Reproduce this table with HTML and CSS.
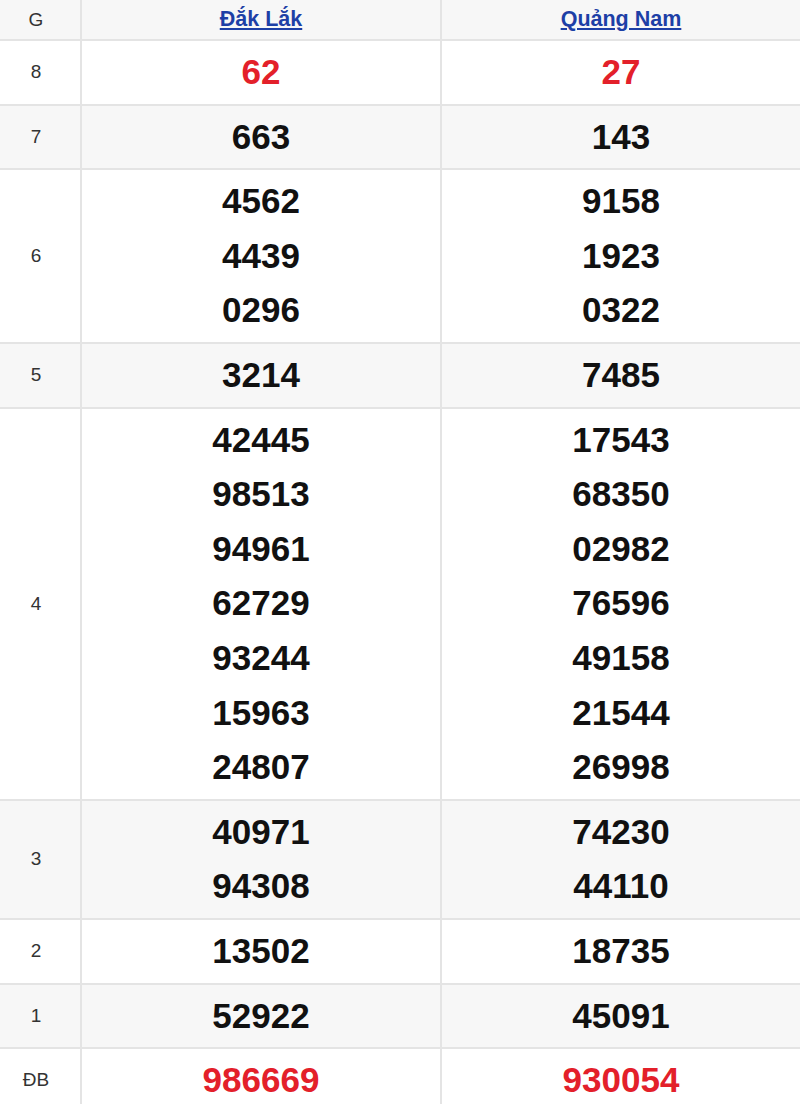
FILE: index.html
```html
<!DOCTYPE html>
<html lang="vi">
<head>
<meta charset="utf-8">
<title>Kết quả xổ số</title>
<link rel="stylesheet" href="styles.css">
</head>
<body>
<table class="kq">
  <colgroup>
    <col class="c-g">
    <col class="c-p">
    <col class="c-p">
  </colgroup>
  <thead>
    <tr class="alt head">
      <th class="g">G</th>
      <th><a href="#">Đắk Lắk</a></th>
      <th><a href="#">Quảng Nam</a></th>
    </tr>
  </thead>
  <tbody>
    <tr>
      <td class="g">8</td>
      <td class="red"><div>62</div></td>
      <td class="red"><div>27</div></td>
    </tr>
    <tr class="alt">
      <td class="g">7</td>
      <td><div>663</div></td>
      <td><div>143</div></td>
    </tr>
    <tr>
      <td class="g">6</td>
      <td><div>4562</div><div>4439</div><div>0296</div></td>
      <td><div>9158</div><div>1923</div><div>0322</div></td>
    </tr>
    <tr class="alt">
      <td class="g">5</td>
      <td><div>3214</div></td>
      <td><div>7485</div></td>
    </tr>
    <tr>
      <td class="g">4</td>
      <td><div>42445</div><div>98513</div><div>94961</div><div>62729</div><div>93244</div><div>15963</div><div>24807</div></td>
      <td><div>17543</div><div>68350</div><div>02982</div><div>76596</div><div>49158</div><div>21544</div><div>26998</div></td>
    </tr>
    <tr class="alt">
      <td class="g">3</td>
      <td><div>40971</div><div>94308</div></td>
      <td><div>74230</div><div>44110</div></td>
    </tr>
    <tr>
      <td class="g">2</td>
      <td><div>13502</div></td>
      <td><div>18735</div></td>
    </tr>
    <tr class="alt">
      <td class="g">1</td>
      <td><div>52922</div></td>
      <td><div>45091</div></td>
    </tr>
    <tr class="last">
      <td class="g">ĐB</td>
      <td class="red"><div>986669</div></td>
      <td class="red"><div>930054</div></td>
    </tr>
  </tbody>
</table>
</body>
</html>
```

FILE: styles.css
```css
html, body {
  margin: 0;
  padding: 0;
  background: #ffffff;
}

body {
  font-family: "Liberation Sans", Arial, sans-serif;
}

.kq {
  width: 800px;
  border-collapse: separate;
  border-spacing: 0;
  table-layout: fixed;
}

.c-g {
  width: 80px;
}

.kq th,
.kq td {
  padding: 4px 0;
  text-align: center;
  vertical-align: middle;
  border-bottom: 2px solid #e4e4e4;
}

.kq th + th,
.kq td + td {
  border-left: 2px solid #e4e4e4;
}

.kq tr.last td {
  border-bottom: none;
}

.kq tr.alt th,
.kq tr.alt td {
  background: #f7f7f7;
}

.kq .head th {
  height: 39px;
  padding: 0;
}

.kq .head th.g {
  padding-right: 8px;
}

.kq th a {
  font-size: 21.5px;
  font-weight: bold;
  color: #1d3fa6;
  text-decoration: underline;
}

.kq .g {
  padding-right: 8px;
  font-size: 19px;
  font-weight: normal;
  color: #333333;
}

.kq td div {
  font-size: 35px;
  font-weight: bold;
  line-height: 54.6px;
  color: #111111;
}

.kq td.red div {
  color: #e3202a;
}
```
